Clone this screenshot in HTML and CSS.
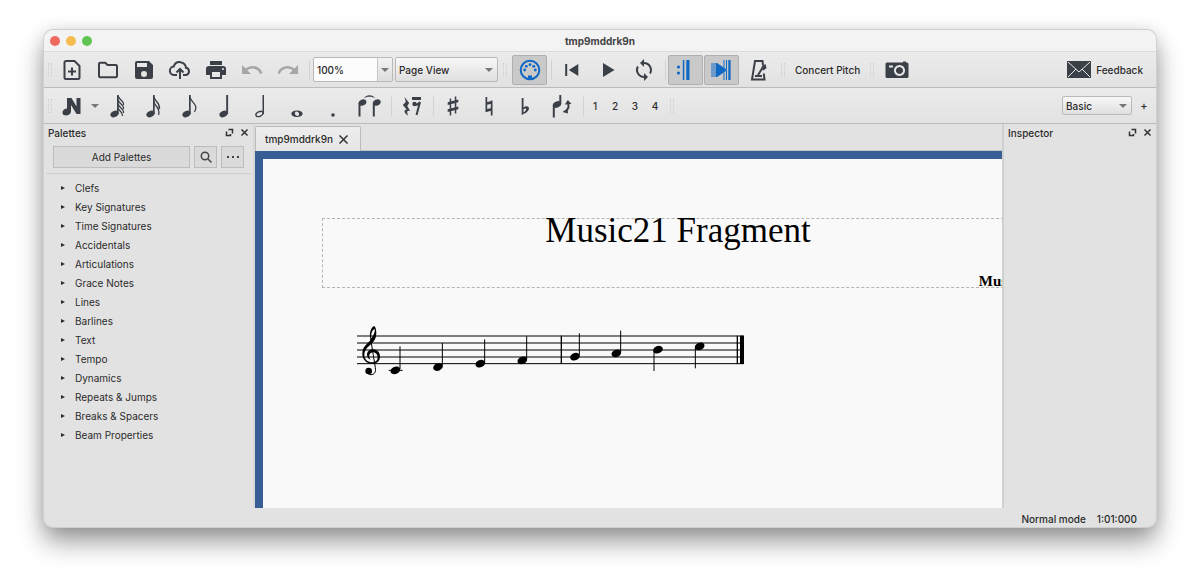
FILE: index.html
```html
<!DOCTYPE html>
<html lang="en">
<head>
    <meta charset="UTF-8">
    <meta name="viewport" content="width=device-width, initial-scale=1.0">
    <title>tmp9mddrk9n</title>
    <link rel="stylesheet" href="styles.css">
</head>
<body>

    <div class="window">
        <header class="titlebar">
            <div class="lights">
                <span class="light red"></span>
                <span class="light yellow"></span>
                <span class="light green"></span>
            </div>
            <h1>tmp9mddrk9n</h1>
        </header>

        <!-- file, view and playback -->
        <div class="toolbar">
            <span class="grip"></span>
            <button class="tool" aria-label="New"><svg viewBox="0 0 24 24"><path class="line" d="M14.500 3H6a1.500 1.500 0 0 0-1.500 1.500v15A1.500 1.500 0 0 0 6 21h12a1.500 1.500 0 0 0 1.500-1.500V8zM12 9.500v8M8 13.500h8"/></svg></button>
            <button class="tool" aria-label="Open"><svg viewBox="0 0 24 24"><path class="line" d="M3 18V6q0-1.300 1.300-1.300h5l2.200 2.300h8.200Q21 7 21 8.300V18q0 1.300-1.300 1.300H4.300Q3 19.300 3 18z"/></svg></button>
            <button class="tool" aria-label="Save"><svg viewBox="0 0 24 24"><path d="M17 3H5a2 2 0 0 0-2 2v14a2 2 0 0 0 2 2h14a2 2 0 0 0 2-2V7zm-5 16a3 3 0 1 1 0-6 3 3 0 0 1 0 6zM15 9H5V5h10z"/></svg></button>
            <button class="tool" aria-label="Save online"><svg viewBox="0 0 24 24"><path class="line" d="M9 17H6.500a4.200 4.200 0 0 1-.8-8.400A6.300 6.300 0 0 1 18 9.800a3.700 3.700 0 0 1 .2 7.200H15M12 21V11.500M8.500 14.500L12 11l3.500 3.500"/></svg></button>
            <button class="tool" aria-label="Print"><svg viewBox="0 0 24 24"><path d="M19 8H5a3 3 0 0 0-3 3v6h4v4h12v-4h4v-6a3 3 0 0 0-3-3zm-3 11H8v-5h8zm3-7a1 1 0 1 1 0-2 1 1 0 0 1 0 2zM18 3H6v4h12z"/></svg></button>
            <button class="tool" aria-label="Undo" disabled><svg viewBox="0 0 24 24"><path d="M12.500 8c-2.650 0-5.050.99-6.900 2.600L2 7v9h9l-3.620-3.620c1.390-1.160 3.160-1.880 5.120-1.880 3.540 0 6.550 2.310 7.600 5.500l2.370-.78C21.080 11.030 17.150 8 12.500 8z"/></svg></button>
            <button class="tool" aria-label="Redo" disabled><svg viewBox="0 0 24 24"><path d="M18.400 10.600C16.550 8.990 14.150 8 11.500 8c-4.650 0-8.580 3.030-9.960 7.220L3.900 16c1.050-3.190 4.050-5.500 7.600-5.500 1.950 0 3.730.72 5.120 1.880L13 16h9V7z"/></svg></button>
            <span class="sep"></span>
            <div class="combo">
                <input type="text" value="100%" aria-label="Zoom">
                <button class="drop" aria-label="Zoom levels"><i class="arrow"></i></button>
            </div>
            <div class="select view-select">
                <select aria-label="View"><option>Page View</option><option>Continuous View</option><option>Single Page</option></select>
                <i class="arrow"></i>
            </div>
            <span class="grip"></span>
            <button class="tool checked" aria-label="MIDI input"><svg viewBox="0 0 24 24"><circle class="line" cx="12" cy="12" r="9.300"/><circle cx="6.700" cy="12" r="1.400"/><circle cx="8.300" cy="8.300" r="1.400"/><circle cx="12" cy="6.700" r="1.400"/><circle cx="15.700" cy="8.300" r="1.400"/><circle cx="17.300" cy="12" r="1.400"/><path d="M10 17.500h4V21h-4z"/></svg></button>
            <span class="sep"></span>
            <button class="tool" aria-label="Rewind"><svg viewBox="0 0 24 24"><path d="M5.200 6h2v12h-2zM18.300 6v12L8.800 12z"/></svg></button>
            <button class="tool" aria-label="Play"><svg viewBox="0 0 24 24"><path d="M7 5v14l11.500-7z"/></svg></button>
            <button class="tool" aria-label="Loop"><svg viewBox="0 0 24 24"><path d="M12 4V1L8 5l4 4V6a6 6 0 0 1 5.300 8.800l1.460 1.460A8 8 0 0 0 12 4zm0 14a6 6 0 0 1-5.300-8.800L5.240 7.740A8 8 0 0 0 12 20v3l4-4-4-4z"/></svg></button>
            <span class="sep"></span>
            <button class="tool checked" aria-label="Play repeats"><svg viewBox="0 0 24 24"><circle cx="4.500" cy="9" r="1.600"/><circle cx="4.500" cy="15" r="1.600"/><path d="M8.800 2h1.500v20H8.800zM12.300 2h3.200v20h-3.200z"/></svg></button>
            <button class="tool checked" aria-label="Pan score"><svg viewBox="0 0 24 24"><path d="M7 5l10.500 7L7 19z"/><path d="M1.500 5h1v14h-1zM3.500 5h1v14h-1zM5.500 5H7v14H5.500zM13.500 2h1v7.500h-1zM13.500 14.500h1V22h-1zM16 2h1v9h-1zM16 13h1v9h-1zM18.300 2h2.300v20h-2.300z"/></svg></button>
            <button class="tool" aria-label="Metronome"><svg viewBox="0 0 24 24"><path class="line" d="M17 7.500L16.500 3H9L6 21.500h12.500l-.7-6M9 18h7M12 17l5-8"/><path d="M16 8l3.500-2 1 4-3 2.500-2-1.500z"/></svg></button>
            <span class="grip"></span>
            <button class="text-tool">Concert Pitch</button>
            <span class="grip"></span>
            <button class="tool" aria-label="Image capture"><svg viewBox="0 0 24 24"><path fill-rule="evenodd" d="M2 4.500h16V3.500h3v1h1q1.500 0 1.500 1.500v12.500q0 1.500-1.500 1.500H2Q.5 20 .5 18.500V6Q.5 4.500 2 4.500zM14.500 7a5.500 5.500 0 1 0 .01 0zM14.500 9a3.500 3.500 0 1 1-.01 0zM4 7.500v2h4v-2z"/></svg></button>
            <button class="feedback">
                <svg viewBox="0 0 24 17"><path d="M0 0h24v17H0z"/><path class="flap" d="M1 1l11 10L23 1M1 16l8-8M23 16l-8-8"/></svg>
                Feedback
            </button>
        </div>

        <!-- note input -->
        <div class="toolbar">
            <span class="grip"></span>
            <button class="tool" aria-label="Note input"><svg viewBox="0 0 24 24"><path d="M7 4h4.500l5 8.500V4h4v16h-4L11 11v6.500q-.5 3.500-4.500 4-4.500 0-4-3.500 1-3.500 4.500-3.500z"/></svg></button>
            <button class="drop-tool" aria-label="Note input modes"><i class="arrow"></i></button>
            <button class="tool" aria-label="64th"><svg viewBox="0 0 24 24"><ellipse cx="8.500" cy="20" rx="4.300" ry="3" transform="rotate(-25 8.500 20)"/><path d="M11 1h1.700v19H11z"/><path class="thin" d="M12 2c1 4 6 4 5.500 9M12 6c1 4 6 4 5.500 9M12 10c1 4 6 4 5.500 9M12 14c1 3 5 4 4.500 8"/></svg></button>
            <button class="tool" aria-label="16th"><svg viewBox="0 0 24 24"><ellipse cx="8.500" cy="20" rx="4.300" ry="3" transform="rotate(-25 8.500 20)"/><path d="M11 1h1.700v19H11z"/><path class="thin" d="M12 3c1 5 6 5 5.500 12M12 8c1 5 7 6 4.500 13"/></svg></button>
            <button class="tool" aria-label="Eighth"><svg viewBox="0 0 24 24"><ellipse cx="8.500" cy="20" rx="4.300" ry="3" transform="rotate(-25 8.500 20)"/><path d="M11 1h1.700v19H11z"/><path class="thin" d="M12 3c1 6 9 7 4.500 15"/></svg></button>
            <button class="tool" aria-label="Quarter"><svg viewBox="0 0 24 24"><ellipse cx="9.500" cy="20" rx="4.300" ry="3" transform="rotate(-25 9.500 20)"/><path d="M12.200 1h1.900v19h-1.900z"/></svg></button>
            <button class="tool" aria-label="Half"><svg viewBox="0 0 24 24"><ellipse class="thin" cx="9.500" cy="20" rx="3.800" ry="2.300" transform="rotate(-25 9.500 20)"/><path d="M12.500 1H14v19h-1.500z"/></svg></button>
            <button class="tool" aria-label="Whole"><svg viewBox="0 0 24 24"><path fill-rule="evenodd" d="M11 16.500c7.500 0 7.500 6.500 0 6.500s-7.500-6.500 0-6.500zM10.300 17.500c-2.500.5-1.500 4.500 1.400 4.500 2.500-.5 1.500-4.500-1.400-4.500z"/></svg></button>
            <button class="tool" aria-label="Dot"><svg viewBox="0 0 24 24"><circle cx="11" cy="21" r="1.800"/></svg></button>
            <button class="tool" aria-label="Tie"><svg viewBox="0 0 24 24"><ellipse cx="4.500" cy="8.500" rx="4" ry="3" transform="rotate(-25 4.500 8.500)"/><ellipse cx="18.800" cy="8.500" rx="4" ry="3" transform="rotate(-25 18.800 8.500)"/><path d="M.5 9h2v13.500H.5zM14.800 9h2v13.500h-2zM5.500 4.500c3-4.500 9-4.500 12 0-3-2.500-9-2.500-12 0z"/></svg></button>
            <span class="sep"></span>
            <button class="tool" aria-label="Rest"><svg viewBox="0 0 24 24"><path d="M4.500 3l4.700 6-2 3 3 5c-3-1-4 .5-2 4.500-4-2-5-5.500-1.500-6L2.800 11l3-3z"/><path d="M12 3h9v3h-9z"/><circle cx="14.500" cy="10" r="2.200"/><path class="line" d="M14.500 11c3 0 4.500-1 5.500-3L16.500 21"/></svg></button>
            <span class="sep"></span>
            <button class="tool" aria-label="Sharp"><svg viewBox="0 0 24 24"><path d="M7.700 4.500h1.500v17H7.700zM12.800 2.500h1.500v17h-1.500zM5.700 8.200l10.600-2.700v2.800L5.700 11zM5.700 15.200l10.600-2.700v2.800L5.700 18z"/></svg></button>
            <button class="tool" aria-label="Natural"><svg viewBox="0 0 24 24"><path d="M7.500 3h1.700v15H7.500zM12.800 6.500h1.700v15h-1.700zM7.500 8.500l6.500-1.700v2.700l-6.500 1.700zM7.500 15.500l6.500-1.700v2.700l-6.500 1.700z"/></svg></button>
            <button class="tool" aria-label="Flat"><svg viewBox="0 0 24 24"><path fill-rule="evenodd" d="M7.700 4h1.800v9.500c3-2.500 6.500-1 5.300 2-1 2.500-4 4-7.100 5.500zM9.500 15v3.500c3-1.800 4-5.500 0-3.500z"/></svg></button>
            <button class="tool" aria-label="Flip"><svg viewBox="0 0 24 24"><ellipse cx="7" cy="10.500" rx="4.300" ry="3" transform="rotate(-25 7 10.500)"/><path d="M2.800 11h2v12.500h-2zM9.300 1h2v9h-2z"/><path class="line" d="M15 17.500q5-3 3-8"/><path d="M12.500 18l5-3.500.5 5zM14.800 10.500l3-4.500 3.700 4z"/></svg></button>
            <span class="sep"></span>
            <div class="voices">
                <button>1</button>
                <button>2</button>
                <button>3</button>
                <button>4</button>
            </div>
            <span class="grip"></span>
            <div class="select workspace-select">
                <select aria-label="Workspace"><option>Basic</option><option>Advanced</option></select>
                <i class="arrow"></i>
            </div>
            <button class="add-workspace" aria-label="New workspace">+</button>
        </div>

        <div class="main">
            <aside class="panel palettes">
                <div class="panel-head">
                    <h2>Palettes</h2>
                    <button aria-label="Undock palettes"><svg viewBox="0 0 9 9"><path d="M3.500 1.500H7.500v4M1.500 3.500v4h4V6"/></svg></button>
                    <button aria-label="Close palettes"><svg viewBox="0 0 9 9"><path d="M1.500 1.500l6 6M7.500 1.500l-6 6"/></svg></button>
                </div>
                <div class="palette-actions">
                    <button class="add">Add Palettes</button>
                    <button aria-label="Search palettes"><svg viewBox="0 0 12 12"><circle cx="5" cy="5" r="3.700"/><path d="M8 8l3.500 3.500"/></svg></button>
                    <button aria-label="More"><svg viewBox="0 0 12 12"><path class="dots" d="M0 5h2v2H0zM5 5h2v2H5zM10 5h2v2h-2z"/></svg></button>
                </div>
                <ul class="palette-list">
                    <li><button>Clefs</button></li>
                    <li><button>Key Signatures</button></li>
                    <li><button>Time Signatures</button></li>
                    <li><button>Accidentals</button></li>
                    <li><button>Articulations</button></li>
                    <li><button>Grace Notes</button></li>
                    <li><button>Lines</button></li>
                    <li><button>Barlines</button></li>
                    <li><button>Text</button></li>
                    <li><button>Tempo</button></li>
                    <li><button>Dynamics</button></li>
                    <li><button>Repeats &amp; Jumps</button></li>
                    <li><button>Breaks &amp; Spacers</button></li>
                    <li><button>Beam Properties</button></li>
                </ul>
            </aside>

            <main class="document">
                <div class="tabs">
                    <div class="tab">
                        <span>tmp9mddrk9n</span>
                        <button aria-label="Close tab"><svg viewBox="0 0 9 9"><path d="M.5.5l8 8M8.500.5l-8 8"/></svg></button>
                    </div>
                </div>
                <div class="canvas">
                    <div class="sheet">
                        <div class="title-frame">
                            <p class="score-title">Music21 Fragment</p>
                            <p class="composer">Music21</p>
                        </div>
                        <svg class="staff" viewBox="51 21 1164 168" role="img" aria-label="C major scale, C to C">
                            <path class="lines" d="M51 63H1211M51 84H1211M51 105H1211M51 126H1211M51 146H1211"/>
                            <!-- treble clef -->
                            <path fill-rule="evenodd" d="M102 33C94 37 88 52 90 66L92 76C80 87 67 97 67 116C67 134 80 146 97 146C112 146 120 136 120 125C120 112 111 103 99 103C87 103 81 111 81 119C81 127 86 132 92 134C88 129 87 125 88 121C89 114 95 112 99 112C107 112 113 119 113 127C113 137 107 142 97 142C84 142 73 134 73 120C73 105 84 95 94 87C103 79 109 69 109 54C109 43 106 34 102 33ZM104 42C106 48 102 60 94 70C92 58 96 45 104 42Z"/>
                            <path class="curl" d="M92 72L106 158C109 172 102 179 93 179C88 179 83 176 80 172"/>
                            <circle cx="86" cy="168" r="10"/>
                            <!-- note heads -->
                            <g>
                                <ellipse cx="166" cy="166" rx="15" ry="11" transform="rotate(-22 166 166)"/>
                                <ellipse cx="294" cy="156" rx="15" ry="11" transform="rotate(-22 294 156)"/>
                                <ellipse cx="421" cy="146" rx="15" ry="11" transform="rotate(-22 421 146)"/>
                                <ellipse cx="547" cy="136" rx="15" ry="11" transform="rotate(-22 547 136)"/>
                                <ellipse cx="705" cy="125" rx="15" ry="11" transform="rotate(-22 705 125)"/>
                                <ellipse cx="829" cy="115" rx="15" ry="11" transform="rotate(-22 829 115)"/>
                                <ellipse cx="954" cy="104" rx="15" ry="11" transform="rotate(-22 954 104)"/>
                                <ellipse cx="1079" cy="94" rx="15" ry="11" transform="rotate(-22 1079 94)"/>
                            </g>
                            <path class="stems" d="M146 166H188M180 162V94M307 152V84M434 142V73M560 132V64M718 121V55M842 111V47M942 108V168M1066 98V160"/>
                            <path class="bars" d="M664 62V147M1192 62V147"/>
                            <path d="M1200 62H1212V147H1200z"/>
                        </svg>
                    </div>
                </div>
            </main>

            <aside class="panel inspector">
                <div class="panel-head">
                    <h2>Inspector</h2>
                    <button aria-label="Undock inspector"><svg viewBox="0 0 9 9"><path d="M3.500 1.500H7.500v4M1.500 3.500v4h4V6"/></svg></button>
                    <button aria-label="Close inspector"><svg viewBox="0 0 9 9"><path d="M1.500 1.500l6 6M7.500 1.500l-6 6"/></svg></button>
                </div>
            </aside>
        </div>

        <footer class="statusbar">
            <span>Normal mode</span>
            <span>1:01:000</span>
        </footer>
    </div>

</body>
</html>
```

FILE: styles.css
```css
* {
    box-sizing: border-box;
}

body {
    margin: 0;
    padding: 30px 44px 58px;
    height: 100vh;
    background-color: #fff;
    color: #2b2b2b;
    font-family: Inter, "Liberation Sans", sans-serif;
    font-size: 10px;
    font-weight: 500;
    overflow: hidden;
}

button,
input,
select {
    font: inherit;
    color: inherit;
    border: none;
    background: none;
    padding: 0;
    margin: 0;
}

.window {
    display: flex;
    flex-direction: column;
    height: 100%;
    background-color: #e2e2e2;
    border-radius: 9px;
    overflow: hidden;
    box-shadow: 0 0 0 1px #cfcfcf, 0 14px 26px rgba(0, 0, 0, 0.42), 0 0 16px rgba(0, 0, 0, 0.1);
}

/* title bar */
.titlebar {
    display: grid;
    grid-template-columns: 1fr auto 1fr;
    align-items: center;
    height: 22px;
    padding: 0 6px;
    background-color: #f3f3f3;
    border-bottom: 1px solid #dcdcdc;
}

.titlebar h1 {
    margin: 0;
    font-size: 10px;
    font-weight: 700;
    color: #444;
}

.lights {
    display: flex;
    gap: 6px;
}

.light {
    width: 10px;
    height: 10px;
    border-radius: 50%;
}

.red {
    background-color: #ee6a5f;
}

.yellow {
    background-color: #f5bd4f;
}

.green {
    background-color: #61c554;
}

/* toolbars */
.toolbar {
    display: flex;
    align-items: center;
    height: 36px;
    background: linear-gradient(#ebebeb, #e2e2e2);
    border-bottom: 1px solid #bcbcbc;
}

.grip {
    width: 4px;
    height: 14px;
    margin: 0 5px;
    border: 1px dotted #cdcdcd;
    border-width: 0 1px;
}

.grip:first-child {
    margin: 0 2px 0 4px;
}

.sep {
    width: 1px;
    height: 20px;
    margin: 0 2px 0 3px;
    background-color: #d2d2d2;
}

.tool {
    display: flex;
    align-items: center;
    justify-content: center;
    width: 36px;
    height: 30px;
}

.tool svg {
    width: 24px;
    height: 24px;
    flex: none;
    fill: #3b3f47;
    stroke: none;
}

.tool .line {
    fill: none;
    stroke: #3b3f47;
    stroke-width: 2;
}

.tool .thin {
    fill: none;
    stroke: #3b3f47;
    stroke-width: 1.3;
}

.tool:disabled svg {
    fill: #a6a6a6;
}

.tool.checked {
    width: 35px;
    margin-right: 1px;
    background-color: #c9c9c9;
    border: 1px solid #b0b0b0;
    border-radius: 2px;
}

.tool.checked svg {
    fill: #0e68c4;
}

.tool.checked .line {
    stroke: #0e68c4;
}

.arrow {
    width: 0;
    height: 0;
    border: 4px solid transparent;
    border-top: 4px solid #777;
    border-bottom: none;
}

.combo {
    display: flex;
    width: 80px;
    height: 25px;
    margin: 0 2px 0 1px;
    background-color: #fcfcfc;
    border: 1px solid #b9b9b9;
    border-radius: 2px;
}

.combo input {
    flex: 1;
    min-width: 0;
    padding: 0 3px;
}

.drop {
    display: flex;
    align-items: center;
    justify-content: center;
    width: 15px;
    background: linear-gradient(#f2f2f2, #dedede);
    border-left: 1px solid #c6c6c6;
}

.select {
    position: relative;
    background: linear-gradient(#f8f8f8, #dfdfdf);
    border: 1px solid #b9b9b9;
    border-radius: 2px;
}

.select select {
    display: block;
    width: 100%;
    height: 100%;
    padding: 0 3px;
    appearance: none;
}

.select .arrow {
    position: absolute;
    right: 4px;
    top: 50%;
    margin-top: -2px;
    pointer-events: none;
}

.view-select {
    width: 103px;
    height: 25px;
}

.workspace-select {
    width: 70px;
    height: 19px;
    margin-left: auto;
}

.text-tool {
    padding: 0 5px;
}

.feedback {
    display: flex;
    align-items: center;
    gap: 5px;
    margin-left: auto;
    padding-right: 13px;
}

.feedback svg {
    width: 24px;
    height: 17px;
    fill: #3b3f47;
}

.feedback .flap {
    fill: none;
    stroke: #e8e8e8;
}

.drop-tool {
    display: flex;
    justify-content: center;
    width: 10px;
}

.voices {
    display: flex;
    margin-left: -1px;
}

.voices button {
    width: 20px;
}

.add-workspace {
    width: 24px;
    font-size: 11px;
}

/* docked panels */
.main {
    display: grid;
    grid-template-columns: 211px 1fr 154px;
    flex: 1;
    min-height: 0;
}

.palettes {
    border-right: 2px solid #d8d8d8;
}

.inspector {
    border-left: 2px solid #d0d0d0;
}

.panel-head {
    display: flex;
    align-items: center;
    gap: 6px;
    height: 17px;
    padding: 0 4px;
}

.panel-head h2 {
    flex: 1;
    margin: 0;
    font-size: 10px;
    font-weight: 500;
}

.panel-head button {
    display: flex;
}

.panel-head svg {
    width: 9px;
    height: 9px;
    fill: none;
    stroke: #333;
    stroke-width: 1.5;
}

.palette-actions {
    display: flex;
    gap: 4px;
    margin: 0 2px;
    padding: 5px 7px 5px 7px;
    border-bottom: 1px solid #cfcfcf;
}

.palette-actions button {
    display: flex;
    align-items: center;
    justify-content: center;
    width: 23px;
    height: 22px;
    background-color: #dadada;
    border: 1px solid #bdbdbd;
}

.palette-actions .add {
    flex: 1;
    font-weight: 400;
}

.palette-actions svg {
    width: 12px;
    height: 12px;
    fill: none;
    stroke: #444;
    stroke-width: 1.5;
}

.palette-actions .dots {
    fill: #444;
    stroke: none;
}

.palette-list {
    list-style: none;
    margin: 0;
    padding: 4px 0;
    font-weight: 400;
}

.palette-list button {
    display: flex;
    align-items: center;
    gap: 10px;
    width: 100%;
    height: 19px;
    padding-left: 17px;
}

.palette-list button::before {
    content: "";
    border: 2px solid transparent;
    border-left: 4px solid #2b2b2b;
    border-right: none;
}

/* score */
.document {
    display: flex;
    flex-direction: column;
    min-width: 0;
}

.tabs {
    height: 27px;
    padding-top: 2px;
    border-bottom: 1px solid #c4c4c4;
}

.tab {
    display: inline-flex;
    align-items: center;
    gap: 6px;
    height: 25px;
    padding: 0 12px 0 9px;
    background: linear-gradient(#ededed, #e6e6e6);
    border: 1px solid #bcbcbc;
    border-bottom: none;
    border-radius: 2px 2px 0 0;
}

.tab button {
    display: flex;
}

.tab svg {
    width: 9px;
    height: 9px;
    fill: none;
    stroke: #333;
    stroke-width: 1.5;
}

.canvas {
    flex: 1;
    min-height: 0;
    padding: 8px 0 0 8px;
    background-color: #385f95;
    overflow: hidden;
}

.sheet {
    width: 830px;
    height: 100%;
    padding: 59px;
    background-color: #f9f9f9;
    color: #000;
    font-family: "Liberation Serif", serif;
}

.title-frame {
    display: flex;
    flex-direction: column;
    justify-content: space-between;
    height: 70px;
    border: 1px dashed #b5b5b5;
}

.score-title {
    margin: 0;
    font-size: 35px;
    font-weight: 400;
    line-height: 24px;
    text-align: center;
}

.composer {
    margin: 0;
    font-size: 15px;
    font-weight: 700;
    line-height: 12px;
    text-align: right;
}

.staff {
    display: block;
    width: 388px;
    height: 56px;
    margin: 34px 0 0 35px;
}

.staff path.lines,
.staff path.curl,
.staff path.stems,
.staff path.bars {
    fill: none;
    stroke: #000;
    stroke-width: 3;
}

.staff path.bars {
    stroke-width: 4;
}

/* status bar */
.statusbar {
    display: flex;
    justify-content: flex-end;
    align-items: center;
    gap: 11px;
    height: 19px;
    padding: 2px 19px 0 0;
}
```
